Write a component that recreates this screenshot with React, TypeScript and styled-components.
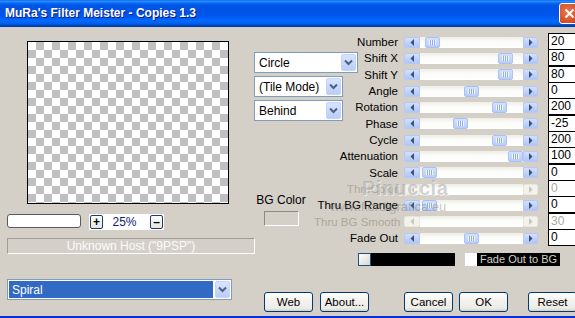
import * as React from "react";
import styled, { createGlobalStyle, css } from "styled-components";

const GlobalStyle = createGlobalStyle`
  html, body {
    margin: 0;
    padding: 0;
    background: #d4d0c8;
  }
`;

const Window = styled.div`
  position: relative;
  width: 575px;
  height: 318px;
  box-sizing: border-box;
  overflow: hidden;
  display: flex;
  flex-direction: column;
  background: #d4d0c8;
  border-bottom: 2px solid #0831d9;
  font-family: "Liberation Sans", Arial, sans-serif;
  font-size: 11px;
  color: #000;
`;

const TitleBar = styled.div`
  flex: 0 0 27px;
  display: flex;
  align-items: center;
  padding-left: 5px;
  background: linear-gradient(
    to bottom,
    #0058ee 0%,
    #3593ff 4%,
    #127dff 8%,
    #0262ee 14%,
    #0057e5 20%,
    #0054e3 24%,
    #0055eb 56%,
    #005bf5 66%,
    #026afe 76%,
    #0062ef 86%,
    #0052d6 92%,
    #0040ab 96%,
    #003092 100%
  );
`;

const TitleText = styled.div`
  font-size: 12px;
  font-weight: bold;
  color: #fff;
  text-shadow: 1px 1px 0 #0a1883;
  padding-bottom: 1px;
`;

const CloseButton = styled.div`
  margin-left: auto;
  margin-right: -5px;
  width: 21px;
  height: 21px;
  flex-shrink: 0;
  box-sizing: border-box;
  border: 1px solid #fff;
  border-radius: 3px;
  background: radial-gradient(circle at 40% 40%, #e8774d 0%, #d9532a 60%, #c0391a 100%);
  display: flex;
  align-items: center;
  justify-content: center;
`;

const Body = styled.div`
  flex: 1;
  display: flex;
`;

const LeftPane = styled.div`
  width: 254px;
  flex-shrink: 0;
  box-sizing: border-box;
  display: flex;
  flex-direction: column;
  padding: 14px 0 0 7px;
`;

const Preview = styled.div`
  width: 202px;
  height: 163px;
  margin-left: 20px;
  box-sizing: border-box;
  border: 1px solid #000;
  background: conic-gradient(#c0c0c0 25%, #fff 0 50%, #c0c0c0 0 75%, #fff 0);
  background-size: 16px 16px;
`;

const ZoomRow = styled.div`
  display: flex;
  align-items: flex-start;
  margin-top: 10px;
  gap: 8px;
`;

const PathInput = styled.div`
  width: 74px;
  height: 14px;
  box-sizing: border-box;
  background: #fff;
  border: 1px solid #5a5a5a;
  border-radius: 3px;
`;

const ZoomGroup = styled.div`
  width: 75px;
  height: 16px;
  box-sizing: border-box;
  padding: 1px;
  background: #fff;
  display: flex;
  align-items: center;
`;

const StepButton = styled.div`
  width: 13px;
  height: 14px;
  box-sizing: border-box;
  border: 1px solid #1c3e6e;
  border-radius: 2px;
  background: linear-gradient(#ffffff, #e6e4dc);
  display: flex;
  align-items: center;
  justify-content: center;
  font-size: 12px;
  font-weight: bold;
  line-height: 1;
`;

const ZoomValue = styled.div`
  flex: 1;
  text-align: center;
  font-size: 12px;
  color: #10207a;
  padding-right: 4px;
`;

const HostBar = styled.div`
  width: 248px;
  height: 16px;
  margin-top: 8px;
  box-sizing: border-box;
  border: 1px solid;
  border-color: #a09c94 #fff #fff #a09c94;
  text-align: center;
  line-height: 14px;
  font-size: 12px;
  color: #fbfbfb;
`;

const SelectBox = styled.div<{ $width: number }>`
  width: ${(p) => p.$width}px;
  height: 21px;
  box-sizing: border-box;
  border: 1px solid #7f9db9;
  background: #fff;
  display: flex;
  align-items: stretch;
  padding: 1px;
`;

const SelectText = styled.div<{ $selected?: boolean }>`
  flex: 1;
  display: flex;
  align-items: center;
  padding-left: 3px;
  font-size: 12px;
  white-space: nowrap;
  overflow: hidden;
  ${(p) =>
    p.$selected &&
    css`
      background: #316ac5;
      color: #fff;
      margin-right: 2px;
    `}
`;

const SelectArrow = styled.div`
  width: 15px;
  flex-shrink: 0;
  border-radius: 2px;
  background: linear-gradient(#d9e5fd, #b9cdf8);
  border: 1px solid #c3d3fd;
  box-sizing: border-box;
  display: flex;
  align-items: center;
  justify-content: center;
`;

const SpiralSelect = styled.div`
  margin-top: 25px;
`;

const RightPane = styled.div`
  flex: 1;
  display: flex;
  flex-direction: column;
`;

const SliderGrid = styled.div`
  margin-top: 6px;
  display: grid;
  grid-template-columns: 60px 90px 134px 1fr;
  grid-auto-rows: 16.33px;
`;

const DropStack = styled.div`
  grid-column: 1 / 3;
  grid-row: 2 / 8;
  align-self: start;
  margin-top: 3px;
  display: flex;
  flex-direction: column;
  gap: 3px;
`;

const BgBlock = styled.div`
  grid-column: 1;
  grid-row: 11 / 14;
  align-self: start;
  margin: -2px 0 0 4px;
  width: 46px;
  display: flex;
  flex-direction: column;
  align-items: center;
  gap: 4px;
`;

const BgLabel = styled.div`
  font-size: 12px;
  line-height: 13px;
  white-space: nowrap;
`;

const BgSwatch = styled.div`
  width: 35px;
  height: 15px;
  box-sizing: border-box;
  border: 1px solid;
  border-color: #8c8a84 #fff #fff #8c8a84;
  background: #d4d0c8;
`;

const Label = styled.div<{ $row: number; $disabled?: boolean }>`
  grid-column: 2;
  grid-row: ${(p) => p.$row};
  align-self: center;
  margin-top: 3px;
  padding-right: 6px;
  text-align: right;
  white-space: nowrap;
  font-size: 11.5px;
  line-height: 13px;
  color: ${(p) => (p.$disabled ? "#aca899" : "#000")};
`;

const Scrollbar = styled.div<{ $row: number }>`
  grid-column: 3;
  grid-row: ${(p) => p.$row};
  align-self: center;
  margin-top: 2px;
  height: 11px;
  display: flex;
`;

const ScrollArrow = styled.div<{ $disabled?: boolean; $w: number }>`
  width: ${(p) => p.$w}px;
  flex-shrink: 0;
  box-sizing: border-box;
  border-radius: 2px;
  display: flex;
  align-items: center;
  justify-content: center;
  ${(p) =>
    p.$disabled
      ? css`
          background: #f3f2ec;
          border: 1px solid #e8e6dd;
        `
      : css`
          background: linear-gradient(#d2e0fd, #b1c6f5);
          border: 1px solid #b4c9f7;
        `}
`;

const Track = styled.div`
  flex: 1;
  display: flex;
  background: linear-gradient(#eeede6 0%, #fbfbf8 40%, #ffffff 100%);
`;

const Thumb = styled.div<{ $pos: number }>`
  margin-left: ${(p) => p.$pos}px;
  width: 15px;
  box-sizing: border-box;
  border: 1px solid #a9c1f6;
  border-radius: 2px;
  background: linear-gradient(#d3e0fd, #bacdf7);
  display: flex;
  align-items: center;
  justify-content: center;
`;

const Grip = styled.div`
  width: 7px;
  height: 5px;
  background: repeating-linear-gradient(
    to right,
    #f2f6fe 0 1px,
    #8eaef2 1px 2px
  );
`;

const ValueBox = styled.div<{ $row: number; $disabled?: boolean }>`
  grid-column: 4;
  grid-row: ${(p) => p.$row};
  align-self: start;
  margin-left: 10px;
  width: 40px;
  height: 17px;
  box-sizing: border-box;
  border: 1px solid #000;
  background: #fff;
  padding-left: 2px;
  font-size: 12px;
  line-height: 15px;
  color: ${(p) => (p.$disabled ? "#aca899" : "#000")};
`;

const ColorRow = styled.div`
  margin-top: 8px;
  padding-left: 104px;
  display: flex;
  height: 13px;
`;

const ColorChip = styled.div`
  width: 13px;
  box-sizing: border-box;
  border: 1px solid #1c5180;
  background: linear-gradient(135deg, #ffffff, #d8d6ce);
`;

const BlackBar = styled.div<{ $width: number }>`
  width: ${(p) => p.$width}px;
  background: #000;
  color: #d4d0c8;
  font-size: 11px;
  line-height: 13px;
  padding-left: 3px;
  box-sizing: border-box;
  white-space: nowrap;
  overflow: hidden;
`;

const CheckSquare = styled.div`
  width: 12px;
  margin-left: 10px;
  background: #fff;
`;

const ButtonRow = styled.div`
  margin-top: 26px;
  padding-left: 10px;
  display: flex;
`;

const XpButton = styled.div<{ $gap: number }>`
  width: 49px;
  height: 20px;
  flex-shrink: 0;
  margin-left: ${(p) => p.$gap}px;
  box-sizing: border-box;
  border: 1px solid #003c74;
  border-radius: 3px;
  background: linear-gradient(#ffffff 0%, #f3f2ee 40%, #ecebe6 85%, #d6d0c5 100%);
  display: flex;
  align-items: center;
  justify-content: center;
  font-size: 11.5px;
`;

const Watermark = styled.div`
  position: absolute;
  left: 362px;
  top: 177px;
  font-size: 20px;
  font-weight: bold;
  letter-spacing: 0.5px;
  color: rgba(140, 140, 140, 0.4);
  text-shadow: 1px 1px 0 rgba(255, 255, 255, 0.5);
  pointer-events: none;
`;

const WatermarkUrl = styled.div`
  position: absolute;
  left: 330px;
  top: 199px;
  font-size: 13px;
  color: rgba(110, 110, 110, 0.4);
  pointer-events: none;
`;

const Chevron = () => (
  <svg width="9" height="7" viewBox="0 0 9 7">
    <path d="M1 1.5 L4.5 5 L8 1.5" fill="none" stroke="#4d6185" strokeWidth="2" />
  </svg>
);

const Tri = ({ dir, disabled }: { dir: "l" | "r"; disabled?: boolean }) => (
  <svg width="5" height="7" viewBox="0 0 5 7">
    <polygon
      points={dir === "l" ? "4,0 0.5,3.5 4,7" : "1,0 4.5,3.5 1,7"}
      fill={disabled ? "#c9c7ba" : "#3d5078"}
    />
  </svg>
);

interface ISelect {
  width: number;
  text: string;
  selected?: boolean;
}

const Select = ({ width, text, selected }: ISelect) => (
  <SelectBox $width={width}>
    <SelectText $selected={selected}>{text}</SelectText>
    <SelectArrow>
      <Chevron />
    </SelectArrow>
  </SelectBox>
);

interface ISlider {
  label: string;
  value: string;
  pos?: number;
  disabled?: boolean;
}

const sliders: ISlider[] = [
  { label: "Number", value: "20", pos: 5 },
  { label: "Shift X", value: "80", pos: 78 },
  { label: "Shift Y", value: "80", pos: 78 },
  { label: "Angle", value: "0", pos: 44 },
  { label: "Rotation", value: "200", pos: 72 },
  { label: "Phase", value: "-25", pos: 33 },
  { label: "Cycle", value: "200", pos: 72 },
  { label: "Attenuation", value: "100", pos: 88 },
  { label: "Scale", value: "0", pos: 2 },
  { label: "ThruColor", value: "0", disabled: true },
  { label: "Thru BG Range", value: "0", pos: 2 },
  { label: "Thru BG Smooth", value: "30", disabled: true },
  { label: "Fade Out", value: "0", pos: 44 },
];

export default function App() {
  return (
    <Window>
      <GlobalStyle />
      <TitleBar>
        <TitleText>MuRa's Filter Meister - Copies 1.3</TitleText>
        <CloseButton>
          <svg width="11" height="11" viewBox="0 0 11 11">
            <path d="M1.5 1.5 L9.5 9.5 M9.5 1.5 L1.5 9.5" stroke="#fff" strokeWidth="2" />
          </svg>
        </CloseButton>
      </TitleBar>
      <Body>
        <LeftPane>
          <Preview />
          <ZoomRow>
            <PathInput />
            <ZoomGroup>
              <StepButton>+</StepButton>
              <ZoomValue>25%</ZoomValue>
              <StepButton>–</StepButton>
            </ZoomGroup>
          </ZoomRow>
          <HostBar>Unknown Host ("9PSP")</HostBar>
          <SpiralSelect>
            <Select width={225} text="Spiral" selected />
          </SpiralSelect>
        </LeftPane>
        <RightPane>
          <SliderGrid>
            <DropStack>
              <Select width={104} text="Circle" />
              <Select width={89} text="(Tile Mode)" />
              <Select width={89} text="Behind" />
            </DropStack>
            <BgBlock>
              <BgLabel>BG Color</BgLabel>
              <BgSwatch />
            </BgBlock>
            {sliders.map((s, i) => (
              <React.Fragment key={s.label}>
                <Label $row={i + 1} $disabled={s.disabled}>
                  {s.label}
                </Label>
                <Scrollbar $row={i + 1}>
                  <ScrollArrow $w={16} $disabled={s.disabled}>
                    <Tri dir="l" disabled={s.disabled} />
                  </ScrollArrow>
                  <Track>
                    {!s.disabled && (
                      <Thumb $pos={s.pos || 0}>
                        <Grip />
                      </Thumb>
                    )}
                  </Track>
                  <ScrollArrow $w={15} $disabled={s.disabled}>
                    <Tri dir="r" disabled={s.disabled} />
                  </ScrollArrow>
                </Scrollbar>
                <ValueBox $row={i + 1} $disabled={s.disabled}>
                  {s.value}
                </ValueBox>
              </React.Fragment>
            ))}
          </SliderGrid>
          <ColorRow>
            <ColorChip />
            <BlackBar $width={84} />
            <CheckSquare />
            <BlackBar $width={83}>Fade Out to BG</BlackBar>
          </ColorRow>
          <ButtonRow>
            <XpButton $gap={0}>Web</XpButton>
            <XpButton $gap={7}>About...</XpButton>
            <XpButton $gap={35}>Cancel</XpButton>
            <XpButton $gap={6}>OK</XpButton>
            <XpButton $gap={20}>Reset</XpButton>
          </ButtonRow>
        </RightPane>
      </Body>
      <Watermark>Pinuccia</Watermark>
      <WatermarkUrl>www.fiordigrafica.eu</WatermarkUrl>
    </Window>
  );
}
